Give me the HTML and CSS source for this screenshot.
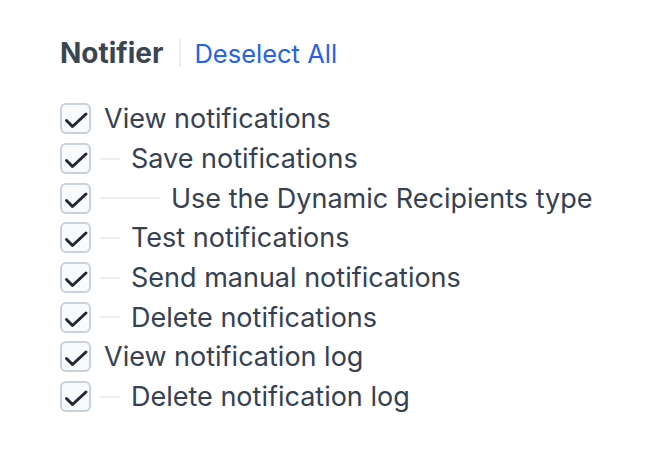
FILE: index.html
```html
<!DOCTYPE html>
<html lang="en">
<head>
  <meta charset="UTF-8" />
  <meta name="viewport" content="width=device-width, initial-scale=1.0" />
  <title>Notifier permissions</title>
  <link rel="stylesheet" href="styles.css">
</head>
<body>
  <div class="group">
    <div class="group-head">
      <h2>Notifier</h2>
      <span class="divider"></span>
      <a href="#" class="toggle-all">Deselect All</a>
    </div>

    <ul class="perms">
      <li class="perm"><span class="box"></span><span class="name">View notifications</span></li>
      <li class="perm lvl-1"><span class="box"></span><span class="branch"></span><span class="name">Save notifications</span></li>
      <li class="perm lvl-2"><span class="box"></span><span class="branch"></span><span class="name">Use the Dynamic Recipients type</span></li>
      <li class="perm lvl-1"><span class="box"></span><span class="branch"></span><span class="name">Test notifications</span></li>
      <li class="perm lvl-1"><span class="box"></span><span class="branch"></span><span class="name">Send manual notifications</span></li>
      <li class="perm lvl-1"><span class="box"></span><span class="branch"></span><span class="name">Delete notifications</span></li>
      <li class="perm"><span class="box"></span><span class="name">View notification log</span></li>
      <li class="perm lvl-1"><span class="box"></span><span class="branch"></span><span class="name">Delete notification log</span></li>
    </ul>
  </div>
</body>
</html>
```

FILE: styles.css
```css
body {
  margin: 0;
  background: #fff;
  font-family: Inter, "Noto Sans", sans-serif;
  color: #354152;
}

.group {
  padding: 37px 0 0 60px;
}

.group-head {
  display: flex;
  align-items: center;
  height: 32px;
}

.group-head h2 {
  margin: 0;
  font-size: 28px;
  font-weight: 700;
  color: #3a4553;
}

.divider {
  width: 2px;
  height: 28px;
  background: #eceef1;
  margin: 0 13px 0 16px;
}

.toggle-all {
  font-size: 25.5px;
  color: #2563eb;
  text-decoration: none;
}

.perms {
  list-style: none;
  margin: 30px 0 0;
  padding: 0;
}

.perm {
  display: flex;
  align-items: center;
  height: 39.7px;
  font-size: 27px;
}

/* checked box with a dark tick */
.box {
  width: 27px;
  height: 27px;
  flex: none;
  border: 2px solid #c8d2df;
  border-radius: 6px;
  background: #f8fafc url("data:image/svg+xml,%3Csvg xmlns='http://www.w3.org/2000/svg' viewBox='0 0 31 31'%3E%3Cpath d='M6.5 17.5l6 6 13.5-12.5' fill='none' stroke='%231f2937' stroke-width='3' stroke-linecap='round' stroke-linejoin='round'/%3E%3C/svg%3E") center / 100% no-repeat;
  background-origin: border-box;
}

.name {
  margin-left: 13px;
}

.branch {
  height: 2px;
  background: #eceef1;
  margin-left: 9px;
}

.branch + .name {
  margin-left: 11px;
}

.lvl-1 .branch { width: 20px; }
.lvl-2 .branch { width: 60px; }
```
